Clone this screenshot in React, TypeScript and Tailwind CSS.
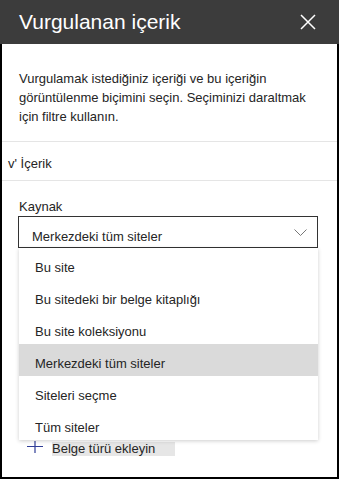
const options = [
  "Bu site",
  "Bu sitedeki bir belge kitaplığı",
  "Bu site koleksiyonu",
  "Merkezdeki tüm siteler",
  "Siteleri seçme",
  "Tüm siteler",
];

const App = () => {
  return (
    <div
      className="w-[339px] h-[479px] bg-white text-[#252525] flex flex-col overflow-hidden"
      style={{ fontFamily: "'Liberation Sans', Arial, sans-serif" }}
    >
      <header className="h-[44px] shrink-0 bg-[#3c3c3c] flex items-center justify-between pl-[19px] pr-[23px]">
        <h1 className="text-[21px] text-white leading-none pb-[1px]">Vurgulanan içerik</h1>
        <svg width="16" height="16" viewBox="0 0 16 16" className="text-white">
          <path d="M1 1 L15 15 M15 1 L1 15" stroke="currentColor" strokeWidth="1.5" fill="none" />
        </svg>
      </header>

      <div className="relative flex-1 flex flex-col border-l-2 border-r-2 border-b-2 border-black">
        <p className="pt-[25px] pb-[15px] pl-[17px] text-[13px] leading-[19px] whitespace-nowrap">
          Vurgulamak istediğiniz içeriği ve bu içeriğin
          <br />
          görüntülenme biçimini seçin. Seçiminizi daraltmak
          <br />
          için filtre kullanın.
        </p>
        <div className="border-t border-[#e5e5e5]" />
        <div className="h-[38px] flex items-center pl-[6px] text-[13px] pt-[5px]">v' İçerik</div>
        <div className="border-t border-[#e5e5e5]" />

        <div className="pl-[16px] pt-[16px]">
          <label className="block text-[13px] leading-[19px] pl-[1px]">Kaynak</label>
          <div className="relative w-[300px]">
            <button className="w-full h-[32px] border border-[#333] flex items-center justify-between pl-[13px] pr-[10px] text-[13px] pt-[9px]">
              <span>Merkezdeki tüm siteler</span>
              <svg width="13" height="8" viewBox="0 0 13 8" className="mb-[8px]">
                <path d="M0.5 0.5 L6.5 6.5 L12.5 0.5" stroke="#777" strokeWidth="1" fill="none" />
              </svg>
            </button>

            <ul className="absolute left-[1px] top-[32px] w-[299px] bg-white z-10 shadow-[0_1px_4px_rgba(0,0,0,0.2)]">
              {options.map((opt) => (
                <li
                  key={opt}
                  className={
                    "h-[32px] flex items-center pl-[16px] text-[13px] pt-[8px] " +
                    (opt === "Merkezdeki tüm siteler" ? "bg-[#dadada]" : "")
                  }
                >
                  {opt}
                </li>
              ))}
            </ul>
          </div>

          <div className="mt-[194px] flex items-center h-[14px]">
            <svg width="16" height="12" viewBox="0 0 16 12" className="ml-[9px] mr-[9px] -mt-[4px]">
              <path d="M0 5.5 H16 M8 0 V12" stroke="#2f3d96" strokeWidth="1.2" fill="none" />
            </svg>
            <span className="bg-[#e6e6e6] h-[14px] w-[123px] text-[13px] leading-[14px]">Belge türü ekleyin</span>
          </div>
        </div>
      </div>
    </div>
  );
};

export default App;
